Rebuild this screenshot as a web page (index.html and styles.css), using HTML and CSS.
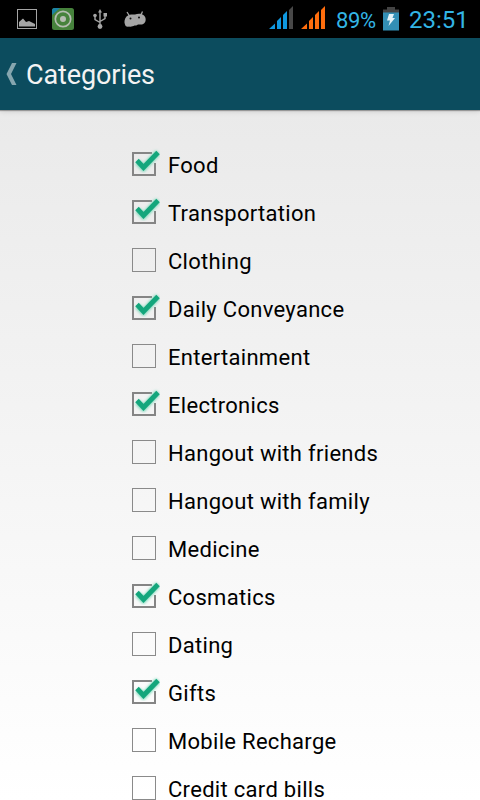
FILE: index.html
```
<!DOCTYPE html>
<html lang="en">
<head>
  <meta charset="UTF-8" />
  <meta name="viewport" content="width=device-width, initial-scale=1.0"/>
  <title>Categories</title>
  <link rel="stylesheet" href="styles.css">
</head>
<body>

  <svg width="0" height="0" class="defs">
    <defs>
      <filter id="glow" x="-30%" y="-30%" width="160%" height="160%">
        <feGaussianBlur stdDeviation="1.6"/>
      </filter>
      <symbol id="on" viewBox="0 0 32 32">
        <path d="M24 5H5V27H27V15" fill="none" stroke="#858585" stroke-width="2"/>
        <path d="M9.500 14L15.500 20L30 4.500" fill="none" stroke="#6fd6b4" stroke-width="6" filter="url(#glow)"/>
        <path d="M9 12.500L15.500 19.500L30 4.500" fill="none" stroke="#14a67c" stroke-width="4.800"/>
      </symbol>
      <symbol id="off" viewBox="0 0 32 32">
        <rect x="4.5" y="4.5" width="23" height="23" fill="none" stroke="#8a8a8a"/>
      </symbol>
    </defs>
  </svg>

  <div class="status-bar">
    <div class="notifications">
      <svg class="picture" width="20" height="20" viewBox="0 0 20 20">
        <rect x=".5" y=".5" width="19" height="19" fill="none" stroke="#a5a5a5"/>
        <path d="M2 17.5V13L6 9.5L9 13L12 12L14 13L18 15V17.5Z" fill="#a5a5a5"/>
      </svg>
      <svg class="app" width="22" height="22" viewBox="0 0 22 22">
        <rect width="22" height="22" rx="2.5" fill="#46823c"/>
        <path d="M0 7V2.5Q0 0 2.5 0H8Z" fill="#1b83a5"/>
        <circle cx="11" cy="11" r="7.7" fill="none" stroke="#b5bdb2" stroke-width="1.7"/>
        <circle cx="11" cy="11" r="3" fill="#b5bdb2"/>
      </svg>
      <svg class="usb" width="14" height="20" viewBox="0 0 14 20">
        <path d="M7 17V2M7 13.500L2 10.500V6M7 12.500L12 9.500V5" fill="none" stroke="#a5a5a5" stroke-width="1.4"/>
        <path d="M7 0L9 3.5H5Z" fill="#a5a5a5"/>
        <circle cx="7" cy="17.5" r="2.4" fill="#a5a5a5"/>
        <circle cx="2" cy="6.5" r="1.8" fill="#a5a5a5"/>
        <rect x="10.500" y="4" width="3.500" height="3.500" fill="#a5a5a5"/>
      </svg>
      <svg class="droid" width="23" height="16" viewBox="0 0 23 16">
        <path d="M3 1L5.500 5M18.500 .5L16.500 5" stroke="#a5a5a5" stroke-width="1.3"/>
        <path d="M1 13.500C0 11.500 .3 8 2.500 5.500C5 3 9 3.500 11 3.500C14 2.500 18 2.500 20 4.500C22.500 7 22 11 20 12.500C18 14 15.500 13.500 14 13.500C13 14.500 11.500 14.500 10.500 14.500C9 15.500 6.500 16 5 15.500C3 16 1.500 15.500 1 13.500Z" fill="#a5a5a5"/>
        <circle cx="6.500" cy="7.500" r="1" fill="#111"/>
        <circle cx="15" cy="6.500" r="1" fill="#111"/>
      </svg>
    </div>
    <div class="system">
      <svg class="signal" width="24" height="23" viewBox="0 0 24 23">
        <path d="M0 23L6 17.500V23ZM8 23V15L12 11V23ZM14 23V9L18 5V23Z" fill="#0f98e0"/>
        <path d="M20 23V4L24 0V23Z" fill="#484848"/>
      </svg>
      <svg class="signal" width="24" height="23" viewBox="0 0 24 23">
        <path d="M0 23L6 17.500V23ZM8 23V15L12 11V23ZM14 23V9L18 5V23ZM20 23V4L24 0V23Z" fill="#ff6d0d"/>
      </svg>
      <span class="percent">89%</span>
      <svg class="battery" width="16" height="24" viewBox="0 0 16 24">
        <path d="M0 2.500H4V0H12V2.500H16V6H0Z" fill="#444"/>
        <rect y="5.500" width="16" height="18" fill="#338fb5"/>
        <path d="M6 7H11L9.500 11H12L5.500 19L7 13.500H4Z" fill="#e4f2f7"/>
      </svg>
      <span class="clock">23:51</span>
    </div>
  </div>

  <div class="action-bar">
    <svg class="back" width="11" height="22" viewBox="0 0 11 22">
      <path d="M6 0H10.500L5 11L10.500 22H6L.5 11Z" fill="#86a6af"/>
    </svg>
    <h1 class="title">Categories</h1>
  </div>

  <div class="content">
    <div class="list">
      <div class="row"><svg class="check"><use href="#on"/></svg><span>Food</span></div>
      <div class="row"><svg class="check"><use href="#on"/></svg><span>Transportation</span></div>
      <div class="row"><svg class="check"><use href="#off"/></svg><span>Clothing</span></div>
      <div class="row"><svg class="check"><use href="#on"/></svg><span>Daily Conveyance</span></div>
      <div class="row"><svg class="check"><use href="#off"/></svg><span>Entertainment</span></div>
      <div class="row"><svg class="check"><use href="#on"/></svg><span>Electronics</span></div>
      <div class="row"><svg class="check"><use href="#off"/></svg><span>Hangout with friends</span></div>
      <div class="row"><svg class="check"><use href="#off"/></svg><span>Hangout with family</span></div>
      <div class="row"><svg class="check"><use href="#off"/></svg><span>Medicine</span></div>
      <div class="row"><svg class="check"><use href="#on"/></svg><span>Cosmatics</span></div>
      <div class="row"><svg class="check"><use href="#off"/></svg><span>Dating</span></div>
      <div class="row"><svg class="check"><use href="#on"/></svg><span>Gifts</span></div>
      <div class="row"><svg class="check"><use href="#off"/></svg><span>Mobile Recharge</span></div>
      <div class="row"><svg class="check"><use href="#off"/></svg><span>Credit card bills</span></div>
    </div>
  </div>

</body>
</html>
```
FILE: styles.css
```
body {
  font-family: Roboto, sans-serif;
  background: #fff;
  margin: 0;
  height: 800px;
  overflow: hidden;
  display: flex;
  flex-direction: column;
}
svg {
  display: block;
  flex: none;
}
.defs {
  position: absolute;
}
.status-bar {
  flex: none;
  height: 38px;
  background: #000;
  color: #33b5e5;
  display: flex;
  justify-content: space-between;
}
.notifications {
  display: flex;
  align-items: center;
  padding-left: 17px;
}
.app {
  margin-left: 15px;
}
.usb {
  margin-left: 19px;
}
.droid {
  margin-left: 17px;
}
.system {
  display: flex;
  align-items: center;
  padding-right: 11px;
  line-height: 38px;
}
.signal {
  margin: -3px 8px 0 0;
}
.percent {
  font-size: 22px;
  letter-spacing: -0.4px;
  width: 39px;
  margin: 3px 8px 0 3px;
}
.battery {
  margin-top: -1px;
}
.clock {
  font-size: 24px;
  width: 60px;
  margin: 1px 0 0 10px;
  white-space: nowrap;
}
.action-bar {
  flex: none;
  height: 72px;
  background: #0c4c5e;
  display: flex;
  align-items: center;
  padding-left: 6px;
  box-shadow: 0 1px 1px rgba(0,0,0,0.3), 0 2px 5px rgba(0,0,0,0.1);
  z-index: 1;
}
.title {
  margin: 1px 0 0 9px;
  color: #f3f3f3;
  font-size: 27px;
  font-weight: 400;
  letter-spacing: -0.1px;
}
.content {
  flex: 1;
  min-height: 0;
  background: linear-gradient(#eaeaea, #fff);
  padding: 30px 0 0 128px;
}
.row {
  height: 48px;
  display: flex;
  align-items: center;
  gap: 8px;
  font-size: 22px;
  letter-spacing: 0.3px;
  line-height: 28px;
  color: #000;
  white-space: nowrap;
}
.row span {
  margin-top: 3px;
}
.check {
  width: 32px;
  height: 32px;
}
```
